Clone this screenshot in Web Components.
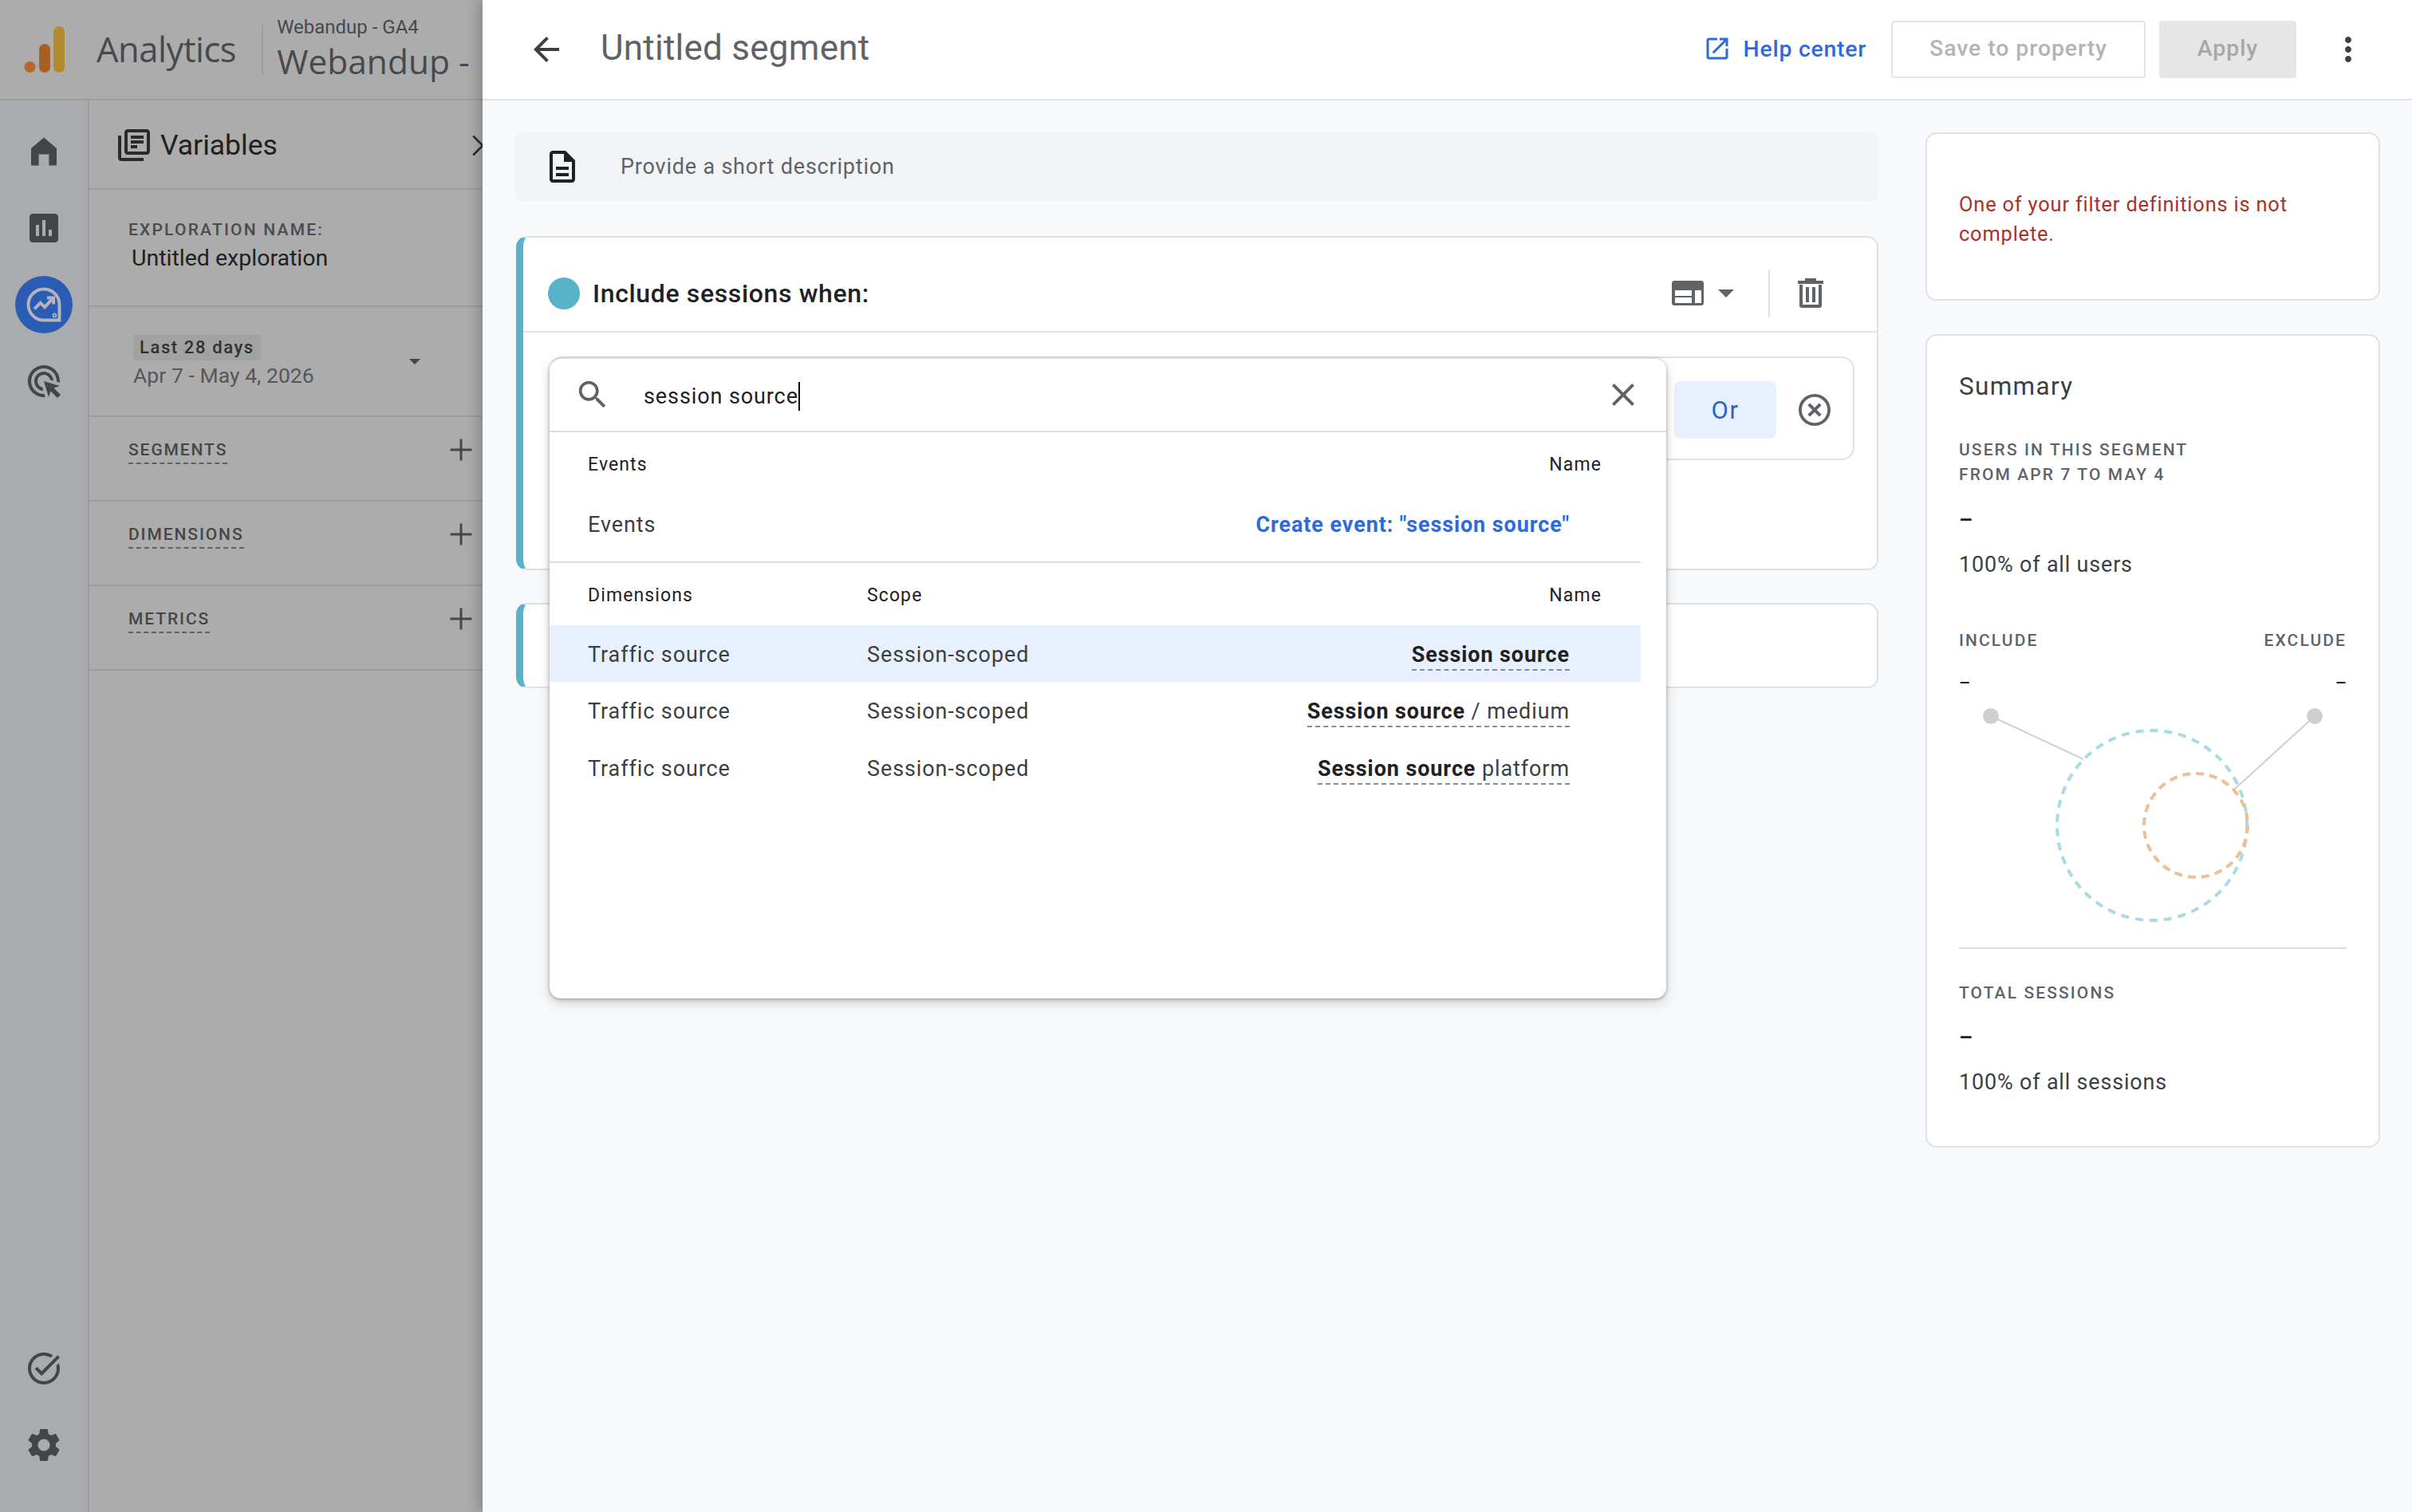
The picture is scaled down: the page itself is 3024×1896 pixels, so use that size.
<!DOCTYPE html>
<html>
<head>
<meta charset="utf-8">
<title>Untitled segment</title>
<style>
  html, body { margin: 0; width: 3024px; height: 1896px; overflow: hidden; font-family: Roboto, "Liberation Sans", sans-serif; }
  body { display: flex; background: #f8f9fa; }
</style>
</head>
<body>
  <ga-shell></ga-shell>
  <segment-panel></segment-panel>

<script>
const ICONS = {
  home: 'M4 20.7V10L12 3.2l8 6.8v10.700h-4.800V13.700H8.800v7z',
  reports: 'M19 3H5c-1.1 0-2 .9-2 2v14c0 1.1.9 2 2 2h14c1.1 0 2-.9 2-2V5c0-1.1-.9-2-2-2zM9 17H7v-7h2v7zm4 0h-2V7h2v10zm4 0h-2v-4h2v4z',
  ads: 'M11.71 17.99C8.53 17.84 6 15.22 6 12c0-3.31 2.69-6 6-6 3.22 0 5.84 2.53 5.99 5.71l-2.1-.63C15.48 9.31 13.89 8 12 8c-2.21 0-4 1.79-4 4 0 1.89 1.31 3.48 3.08 3.89l.63 2.1zM22 12c0 .3-.01.6-.04.9l-1.97-.59c.01-.1.01-.21.01-.31 0-4.42-3.58-8-8-8s-8 3.58-8 8 3.58 8 8 8c.1 0 .21 0 .31-.01l.59 1.97c-.3.03-.6.04-.9.04-5.52 0-10-4.48-10-10S6.48 2 12 2s10 4.48 10 10zm-3.77 4.26L22 15l-10-3 3 10 1.26-3.77 4.27 4.27 1.98-1.98-4.28-4.26z',
  task: 'M22 5.18L10.59 16.6l-4.24-4.24 1.41-1.41 2.83 2.83 10-10L22 5.18zm-2.21 5.04c.13.57.21 1.17.21 1.78 0 4.42-3.58 8-8 8s-8-3.58-8-8 3.58-8 8-8c1.58 0 3.04.46 4.28 1.25l1.44-1.44C16.1 2.67 14.13 2 12 2 6.48 2 2 6.48 2 12s4.48 10 10 10 10-4.48 10-10c0-1.19-.22-2.33-.6-3.39l-1.61 1.61z',
  gear: 'M19.14 12.94c.04-.3.06-.61.06-.94 0-.32-.02-.64-.07-.94l2.03-1.58c.18-.14.23-.41.12-.61l-1.92-3.32c-.12-.22-.37-.29-.59-.22l-2.39.96c-.5-.38-1.03-.7-1.62-.94l-.36-2.54c-.04-.24-.24-.41-.48-.41h-3.84c-.24 0-.43.17-.47.41l-.36 2.54c-.59.24-1.13.57-1.62.94l-2.39-.96c-.22-.08-.47 0-.59.22L2.74 8.87c-.12.21-.08.47.12.61l2.03 1.58c-.05.3-.07.63-.07.94s.02.64.07.94l-2.03 1.58c-.18.14-.23.41-.12.61l1.92 3.32c.12.22.37.29.59.22l2.39-.96c.5.38 1.03.7 1.62.94l.36 2.54c.05.24.24.41.48.41h3.84c.24 0 .44-.17.47-.41l.36-2.54c.59-.24 1.13-.56 1.62-.94l2.39.96c.22.08.47 0 .59-.22l1.92-3.32c.12-.22.07-.47-.12-.61l-2.01-1.58zM12 15.6c-1.98 0-3.6-1.62-3.6-3.6s1.62-3.6 3.6-3.6 3.6 1.62 3.6 3.6-1.62 3.6-3.6 3.6z',
  library: 'M4 6H2v14c0 1.1.9 2 2 2h14v-2H4V6zm16-4H8c-1.1 0-2 .9-2 2v12c0 1.1.9 2 2 2h12c1.1 0 2-.9 2-2V4c0-1.1-.9-2-2-2zm0 14H8V4h12v12zM10 9h8v2h-8zm0 3h4v2h-4zm0-6h8v2h-8z',
  back: 'M20 11H7.83l5.59-5.59L12 4l-8 8 8 8 1.41-1.41L7.83 13H20v-2z',
  doc: 'M8 16h8v2H8zm0-4h8v2H8zm6-10H6c-1.1 0-2 .9-2 2v16c0 1.1.89 2 1.99 2H18c1.1 0 2-.9 2-2V8l-6-6zm4 18H6V4h7v5h5v11z',
  open: 'M19 19H5V5h7V3H5c-1.11 0-2 .9-2 2v14c0 1.1.89 2 2 2h14c1.1 0 2-.9 2-2v-7h-2v7zM14 3v2h3.59l-9.83 9.83 1.41 1.41L19 6.41V10h2V3h-7z',
  more: 'M12 8c1.1 0 2-.9 2-2s-.9-2-2-2-2 .9-2 2 .9 2 2 2zm0 2c-1.1 0-2 .9-2 2s.9 2 2 2 2-.9 2-2-.9-2-2-2zm0 6c-1.1 0-2 .9-2 2s.9 2 2 2 2-.9 2-2-.9-2-2-2z',
  search: 'M15.5 14h-.79l-.28-.27C15.41 12.59 16 11.11 16 9.5 16 5.91 13.09 3 9.5 3S3 5.91 3 9.5 5.91 16 9.5 16c1.61 0 3.09-.59 4.23-1.57l.27.28v.79l5 4.99L20.49 19l-4.99-5zm-6 0C7.01 14 5 11.99 5 9.5S7.01 5 9.5 5 14 7.01 14 9.5 11.99 14 9.5 14z',
  close: 'M19 6.41L17.59 5 12 10.59 6.41 5 5 6.41 10.59 12 5 17.59 6.41 19 12 13.41 17.59 19 19 17.59 13.41 12z',
  remove: 'M12 2a10 10 0 1 0 0 20 10 10 0 0 0 0-20zm0 1.900a8.100 8.100 0 1 1 0 16.200 8.100 8.100 0 0 1 0-16.200zM7.700 9.100 9.100 7.700 12 10.600 14.900 7.700 16.300 9.100 13.400 12 16.300 14.900 14.900 16.300 12 13.400 9.100 16.300 7.700 14.900 10.600 12z',
  plus: 'M21 13h-8v8h-2v-8H3v-2h8V3h2v8h8z',
  chevron: 'M8.6 2L7.2 3.4 15.8 12l-8.6 8.6L8.6 22l10-10z'
};

class GaIcon extends HTMLElement {
  constructor() {
    super();
    const size = this.getAttribute('size') || 40;
    const name = this.getAttribute('name');
    this.attachShadow({ mode: 'open' }).innerHTML = `
      <style>
        :host { display: inline-flex; flex: none; width: ${size}px; height: ${size}px; }
        svg { width: 100%; height: 100%; fill: currentColor; fill-rule: evenodd; display: block; }
      </style>
      <svg viewBox="0 0 24 24"><path d="${ICONS[name]}"></path></svg>`;
  }
}

class GaTopbar extends HTMLElement {
  constructor() {
    super();
    this.attachShadow({ mode: 'open' }).innerHTML = `
      <style>
        :host { display: flex; align-items: center; height: 124px; border-bottom: 2px solid #9d9d9d; padding-left: 30px; background: #acacac; white-space: nowrap; overflow: hidden; }
        svg { width: 51px; height: 58px; flex: none; }
        .brand { margin-left: 40px; font: 400 43.5px/1 "Open Sans", Roboto, sans-serif; letter-spacing: -.45px; color: #48494b; }
        .sep { width: 2px; height: 63px; background: #9c9c9c; margin: 0 17px 0 32px; flex: none; }
        .acct { display: flex; flex-direction: column; color: #48494b; }
        .acct small { font-size: 24px; line-height: 30px; margin-top: -2px; }
        .acct b { font: 400 42.5px/52px "Open Sans", Roboto, sans-serif; margin-top: 2px; }
      </style>
      <svg viewBox="0 0 51 58">
        <circle cx="7.500" cy="51" r="7" fill="#b6672c"></circle>
        <rect x="19" y="22" width="14" height="36" rx="7" fill="#a85f24"></rect>
        <rect x="37" y="0" width="14" height="58" rx="7" fill="#b48a2e"></rect>
      </svg>
      <span class="brand">Analytics</span>
      <span class="sep"></span>
      <span class="acct"><small>Webandup - GA4</small><b>Webandup -</b></span>`;
  }
}

class GaRail extends HTMLElement {
  constructor() {
    super();
    this.attachShadow({ mode: 'open' }).innerHTML = `
      <style>
        :host { display: flex; flex-direction: column; align-items: center; flex: none; box-sizing: border-box; width: 112px; border-right: 2px solid #9b9b9d; background: #a9abae; color: #434548; padding-top: 16px; padding-bottom: 36px; }
        .item { height: 96px; display: flex; align-items: center; justify-content: center; }
        .active { width: 72px; height: 72px; margin: 12px 0; border-radius: 50%; background: #2b5cb3; color: #b3b5bb; }
        .active svg { width: 52px; height: 52px; fill: none; stroke: currentColor; stroke-width: 1.800; }
        .spacer { flex: 1; }
      </style>
      <div class="item"><ga-icon name="home" size="48"></ga-icon></div>
      <div class="item"><ga-icon name="reports" size="48"></ga-icon></div>
      <div class="item active">
        <svg viewBox="0 0 24 24">
          <path d="M12 3a9 9 0 1 0 0 18h9v-9a9 9 0 0 0-9-9z"></path>
          <path d="M6.500 14.500 10 11l2.500 2.500 4.500-5"></path>
          <path d="M13.800 8H17.600v3.800"></path>
          <circle cx="18.200" cy="18.200" r=".4"></circle>
        </svg>
      </div>
      <div class="item"><ga-icon name="ads" size="48"></ga-icon></div>
      <div class="spacer"></div>
      <div class="item"><ga-icon name="task" size="48"></ga-icon></div>
      <div class="item"><ga-icon name="gear" size="50"></ga-icon></div>`;
  }
}

class GaSection extends HTMLElement {
  constructor() {
    super();
    this.attachShadow({ mode: 'open' }).innerHTML = `
      <style>
        :host { display: flex; align-items: flex-start; justify-content: space-between; box-sizing: border-box; height: 106px; border-bottom: 2px solid #9d9d9d; padding: 29px 9px 0 49px; color: #454648; }
        span { font-size: 21px; font-weight: 500; letter-spacing: 1.9px; line-height: 25px; padding-bottom: 3px; border-bottom: 2px dashed #5e5f61; text-transform: uppercase; }
        ga-icon { margin-top: -6px; }
      </style>
      <span><slot></slot></span>
      <ga-icon name="plus" size="36"></ga-icon>`;
  }
}

class GaVariables extends HTMLElement {
  constructor() {
    super();
    this.attachShadow({ mode: 'open' }).innerHTML = `
      <style>
        :host { display: block; flex: 1; min-width: 0; overflow: hidden; background: #acacac; }
        .head { display: flex; align-items: center; box-sizing: border-box; height: 112px; border-bottom: 2px solid #9d9d9d; padding: 2px 0 0 32px; color: #1f2022; }
        .head span { font-size: 35.500px; margin-left: 9px; flex: 1; }
        .head ga-icon { color: #2a2b2d; }
        .head .chev { margin-right: -9px; }
        .name { box-sizing: border-box; height: 147px; border-bottom: 2px solid #9d9d9d; padding: 37px 0 0 49px; }
        .name small { display: block; font-size: 21px; line-height: 26px; letter-spacing: 2.2px; font-weight: 500; color: #4a4b4d; }
        .name div { font-size: 28.500px; line-height: 36px; margin: 5px 0 0 4px; color: #202124; }
        .date { display: flex; align-items: center; box-sizing: border-box; height: 138px; border-bottom: 2px solid #9d9d9d; padding: 0 78px 0 55px; }
        .date .txt { flex: 1; padding-top: 2px; }
        .chip { display: inline-block; background: #a1a2a3; color: #2f3032; font-size: 22px; font-weight: 500; letter-spacing: 1.600px; line-height: 32px; padding: 0 8px; }
        .range { font-size: 26.500px; line-height: 36px; color: #55575a; letter-spacing: .05px; margin-top: 1px; }
        .caret { width: 0; height: 0; border: 7px solid transparent; border-top-color: #43454a; border-bottom: 0; }
      </style>
      <div class="head">
        <ga-icon name="library" size="48"></ga-icon>
        <span>Variables</span>
        <ga-icon class="chev" name="chevron" size="31"></ga-icon>
      </div>
      <div class="name"><small>EXPLORATION NAME:</small><div>Untitled exploration</div></div>
      <div class="date">
        <div class="txt"><span class="chip">Last 28 days</span><div class="range">Apr 7 - May 4, 2026</div></div>
        <div class="caret"></div>
      </div>
      <ga-section>Segments</ga-section>
      <ga-section>Dimensions</ga-section>
      <ga-section>Metrics</ga-section>`;
  }
}

class GaShell extends HTMLElement {
  constructor() {
    super();
    this.attachShadow({ mode: 'open' }).innerHTML = `
      <style>
        :host { display: flex; flex-direction: column; flex: none; width: 605px; height: 1896px; overflow: hidden; background: #acacac; }
        .below { display: flex; flex: 1; min-height: 0; }
      </style>
      <ga-topbar></ga-topbar>
      <div class="below"><ga-rail></ga-rail><ga-variables></ga-variables></div>`;
  }
}

class PanelHeader extends HTMLElement {
  constructor() {
    super();
    this.attachShadow({ mode: 'open' }).innerHTML = `
      <style>
        :host { display: flex; align-items: center; box-sizing: border-box; height: 126px; background: #fff; border-bottom: 2px solid #dfe1e3; padding: 0 56px; white-space: nowrap; }
        .back { color: #3c4043; }
        h1 { margin: 0 0 0 44px; font: 400 44px/1 Roboto, sans-serif; color: #5f6368; letter-spacing: .25px; flex: 1; position: relative; top: -2px; }
        .help { display: flex; align-items: center; gap: 15px; color: #2f6bd8; font-size: 28.500px; font-weight: 500; letter-spacing: .7px; margin-right: 31px; padding-bottom: 2px; }
        button { box-sizing: border-box; height: 72px; border-radius: 4px; font: 500 28.500px Roboto, sans-serif; letter-spacing: .9px; padding: 0 0 3px; }
        .save { width: 319px; border: 2px solid #e3e4e6; background: #fff; color: #b3b4b6; margin-right: 17px; }
        .apply { width: 172px; border: 0; background: #e6e6e6; color: #a6a7a9; margin-right: 41px; }
        .more { color: #3c4043; }
      </style>
      <ga-icon class="back" name="back" size="48"></ga-icon>
      <h1>Untitled segment</h1>
      <span class="help"><ga-icon name="open" size="36"></ga-icon>Help center</span>
      <button class="save">Save to property</button>
      <button class="apply">Apply</button>
      <ga-icon class="more" name="more" size="48"></ga-icon>`;
  }
}

class DescBar extends HTMLElement {
  constructor() {
    super();
    this.attachShadow({ mode: 'open' }).innerHTML = `
      <style>
        :host { display: flex; align-items: center; height: 86px; border-radius: 12px; background: #f1f3f4; padding-left: 36px; color: #5f6368; font-size: 27px; letter-spacing: .8px; }
        ga-icon { color: #202124; margin-right: 49px; }
      </style>
      <ga-icon name="doc" size="48"></ga-icon><slot></slot>`;
  }
}

class PopupRow extends HTMLElement {
  constructor() {
    super();
    const h = this.getAttribute('height') || 72;
    this.attachShadow({ mode: 'open' }).innerHTML = `
      <style>
        :host { display: grid; grid-template-columns: 350px 1fr; align-items: center; box-sizing: border-box; height: ${h}px; padding: 2px 89px 0 48px; color: #3c4043; font-size: 27px; letter-spacing: .9px; }
        :host([head]) { font-size: 23px; color: #202124; padding-right: 49px; letter-spacing: 1.100px; }
        :host([active]) { background: #e8f0fe; }
        .name { display: flex; justify-content: space-between; align-items: center; }
      </style>
      <div><slot name="a"></slot></div>
      <div class="name"><slot name="b"></slot><slot name="c"></slot></div>`;
  }
}

class NameCell extends HTMLElement {
  constructor() {
    super();
    this.attachShadow({ mode: 'open' }).innerHTML = `
      <style>
        :host { display: inline-block; border-bottom: 2px dashed #8a8c8f; line-height: 36px; margin-top: 2px; color: #3c4043; }
        b { font-weight: 700; color: #202124; }
      </style><b>${this.getAttribute('match')}</b><slot></slot>`;
  }
}

class SearchPopup extends HTMLElement {
  constructor() {
    super();
    this.attachShadow({ mode: 'open' }).innerHTML = `
      <style>
        :host { display: block; position: absolute; left: -2px; top: 1px; width: 1400px; height: 802px; box-sizing: border-box; background: #fff; border-radius: 14px; box-shadow: 0 1px 4px rgba(60,64,67,.45), 0 6px 16px rgba(60,64,67,.2); z-index: 10; }
        .search { display: flex; align-items: center; box-sizing: border-box; height: 92px; border-bottom: 2px solid #dadce0; padding: 0 30px 0 31px; color: #5f6368; }
        .q { flex: 1; margin-left: 41px; padding-top: 3px; font-size: 27px; letter-spacing: .9px; color: #202124; }
        .q span { border-right: 2px solid #000; padding: 2px 0; }
        .list { width: 1368px; }
        hr { margin: 10px 0 0; border: 0; border-top: 2px solid #dadce0; }
        .link { color: #2f6bd8; font-weight: 700; }
      </style>
      <div class="search">
        <ga-icon name="search" size="46"></ga-icon>
        <div class="q"><span>session source</span></div>
        <ga-icon name="close" size="48"></ga-icon>
      </div>
      <div class="list">
        <popup-row head height="78"><span slot="a">Events</span><span slot="b"></span><span slot="c">Name</span></popup-row>
        <popup-row height="74"><span slot="a">Events</span><span slot="b"></span><span slot="c" class="link">Create event: "session source"</span></popup-row>
        <hr>
        <popup-row head height="78"><span slot="a">Dimensions</span><span slot="b">Scope</span><span slot="c">Name</span></popup-row>
        <popup-row active height="71"><span slot="a">Traffic source</span><span slot="b">Session-scoped</span><name-cell slot="c" match="Session source"></name-cell></popup-row>
        <popup-row><span slot="a">Traffic source</span><span slot="b">Session-scoped</span><name-cell slot="c" match="Session source"> / medium</name-cell></popup-row>
        <popup-row><span slot="a">Traffic source</span><span slot="b">Session-scoped</span><name-cell slot="c" match="Session source"> platform</name-cell></popup-row>
      </div>`;
  }
}

class FilterCard extends HTMLElement {
  constructor() {
    super();
    this.attachShadow({ mode: 'open' }).innerHTML = `
      <style>
        :host { display: block; box-sizing: border-box; margin-left: 2px; background: #fff; border: 2px solid #dfe1e3; border-left: 9px solid #58b2c9; border-radius: 14px; }
        .head { display: flex; align-items: center; box-sizing: border-box; height: 119px; border-bottom: 2px solid #dfe1e3; padding: 22px 67px 0 31px; }
        .dot { width: 40px; height: 40px; border-radius: 50%; background: #58b2c9; margin-right: 16px; }
        .title { flex: 1; font-size: 32px; font-weight: 500; letter-spacing: .64px; color: #202124; }
        .tools { display: flex; align-items: center; color: #5f6368; }
        .layout { width: 40px; height: 31px; fill: currentColor; }
        .trash { width: 32px; height: 37px; fill: currentColor; }
        .caret { width: 0; height: 0; border: 10px solid transparent; border-top: 10px solid #5f6368; border-bottom: 0; margin: 0 43px 0 18px; }
        .vr { width: 2px; height: 60px; background: #dfe1e3; margin-right: 35px; }
        .body { position: relative; margin: 30px 28px 0 33px; height: 130px; box-sizing: border-box; border: 2px solid #dfe1e3; border-radius: 16px; display: flex; align-items: center; justify-content: flex-end; padding: 4px 24px 0 0; gap: 24px; }
        .or { box-sizing: border-box; width: 128px; height: 72px; border-radius: 8px; background: #e8f0fe; color: #2f62c8; font-size: 31px; font-weight: 400; display: flex; align-items: center; justify-content: center; letter-spacing: 1.500px; }
        .x { color: #5f6368; }
      </style>
      <div class="head">
        <span class="dot"></span>
        <span class="title">Include sessions when:</span>
        <span class="tools">
          <svg class="layout" viewBox="0 0 40 31"><path fill-rule="evenodd" d="M3 0h34c1.700 0 3 1.300 3 3v25c0 1.700-1.300 3-3 3H3c-1.700 0-3-1.300-3-3V3C0 1.300 1.300 0 3 0zm1 12v7h21v-7zm25 0v16h8V12zM4 21v7h21v-7z"></path></svg>
          <span class="caret"></span>
          <span class="vr"></span>
          <svg class="trash" viewBox="0 0 32 37"><path fill-rule="evenodd" d="M9 0h14v3h9v4H0V3h9zM2 8h28v26c0 1.700-1.300 3-3 3H5c-1.700 0-3-1.300-3-3zm4 0v25h20V8zm4 3h4v19h-4zm8 0h4v19h-4z"></path></svg>
        </span>
      </div>
      <div class="body">
        <search-popup></search-popup>
        <span class="or">Or</span>
        <ga-icon class="x" name="remove" size="48"></ga-icon>
      </div>`;
  }
}

class VennDiagram extends HTMLElement {
  constructor() {
    super();
    this.attachShadow({ mode: 'open' }).innerHTML = `
      <style>
        :host { display: block; height: 314px; }
        svg { display: block; width: 485px; height: 314px; }
      </style>
      <svg viewBox="0 0 485 314" fill="none">
        <circle cx="40" cy="24" r="10" fill="#cfcfcf"></circle>
        <circle cx="446" cy="24" r="10" fill="#cfcfcf"></circle>
        <path d="M40 24 156 78M446 24 345 116" stroke="#cfcfcf" stroke-width="2"></path>
        <circle cx="242" cy="161" r="119" stroke="#a9dbe4" stroke-width="4" stroke-dasharray="10 8"></circle>
        <circle cx="297" cy="161" r="65" stroke="#ecbf96" stroke-width="4" stroke-dasharray="10 7"></circle>
      </svg>`;
  }
}

class SideCard extends HTMLElement {
  constructor() {
    super();
    this.attachShadow({ mode: 'open' }).innerHTML = `
      <style>
        :host { display: block; box-sizing: border-box; background: #fff; border: 2px solid #dfe1e3; border-radius: 14px; padding: 0 40px 0 40px; }
      </style>
      <slot></slot>`;
  }
}

class SummaryCard extends HTMLElement {
  constructor() {
    super();
    this.attachShadow({ mode: 'open' }).innerHTML = `
      <style>
        :host { display: block; }
        side-card { padding-top: 44px; padding-bottom: 60px; }
        h2 { margin: 0; font-size: 31.500px; font-weight: 400; line-height: 40px; color: #3c4043; letter-spacing: 1.300px; }
        .lbl { font-size: 21px; font-weight: 500; line-height: 31px; letter-spacing: 2.100px; color: #5f6368; }
        .dash { font-size: 27px; line-height: 40px; color: #202124; font-weight: 500; }
        .val { font-size: 27px; line-height: 40px; letter-spacing: .8px; color: #3c4043; }
        .two { display: flex; justify-content: space-between; }
        hr { margin: 0; border: 0; border-top: 2px solid #dadce0; }
      </style>
      <side-card>
        <h2>Summary</h2>
        <div class="lbl" style="margin-top:44px">USERS IN THIS SEGMENT<br>FROM APR 7 TO MAY 4</div>
        <div class="dash" style="margin-top:21px">–</div>
        <div class="val" style="margin-top:16px">100% of all users</div>
        <div class="lbl two" style="margin-top:60px;line-height:30px"><span>INCLUDE</span><span>EXCLUDE</span></div>
        <div class="dash two" style="margin-top:22px;line-height:34px;font-size:22px"><span>–</span><span>–</span></div>
        <venn-diagram></venn-diagram>
        <hr>
        <div class="lbl" style="margin-top:40px;line-height:30px">TOTAL SESSIONS</div>
        <div class="dash" style="margin-top:21px">–</div>
        <div class="val" style="margin-top:16px">100% of all sessions</div>
      </side-card>`;
  }
}

class SegmentPanel extends HTMLElement {
  constructor() {
    super();
    this.attachShadow({ mode: 'open' }).innerHTML = `
      <style>
        :host { display: flex; flex-direction: column; flex: 1; position: relative; background: #f8f9fa; box-shadow: -2px 0 18px rgba(0,0,0,.3); }
        .body { display: grid; grid-template-columns: 1710px 570px; gap: 59px; padding: 40px 40px 0 40px; align-items: start; }
        .col { display: flex; flex-direction: column; }
        .err { height: 211px; box-sizing: border-box; padding-top: 70px; color: #a8322a; font-size: 25.500px; line-height: 36.500px; letter-spacing: .77px; }
        .card1 { height: 419px; margin-top: 44px; }
        .card2 { height: 107px; margin-top: 41px; }
        .summary { margin-top: 42px; }
      </style>
      <panel-header></panel-header>
      <div class="body">
        <div class="col">
          <desc-bar>Provide a short description</desc-bar>
          <filter-card class="card1"></filter-card>
          <side-card class="card2" style="margin-left:2px;border-left:9px solid #58b2c9"></side-card>
        </div>
        <div class="col">
          <side-card class="err">One of your filter definitions is not complete.</side-card>
          <summary-card class="summary"></summary-card>
        </div>
      </div>`;
  }
}

customElements.define('ga-icon', GaIcon);
customElements.define('ga-topbar', GaTopbar);
customElements.define('ga-rail', GaRail);
customElements.define('ga-section', GaSection);
customElements.define('ga-variables', GaVariables);
customElements.define('ga-shell', GaShell);
customElements.define('panel-header', PanelHeader);
customElements.define('desc-bar', DescBar);
customElements.define('popup-row', PopupRow);
customElements.define('name-cell', NameCell);
customElements.define('search-popup', SearchPopup);
customElements.define('filter-card', FilterCard);
customElements.define('venn-diagram', VennDiagram);
customElements.define('side-card', SideCard);
customElements.define('summary-card', SummaryCard);
customElements.define('segment-panel', SegmentPanel);
</script>
</body>
</html>
